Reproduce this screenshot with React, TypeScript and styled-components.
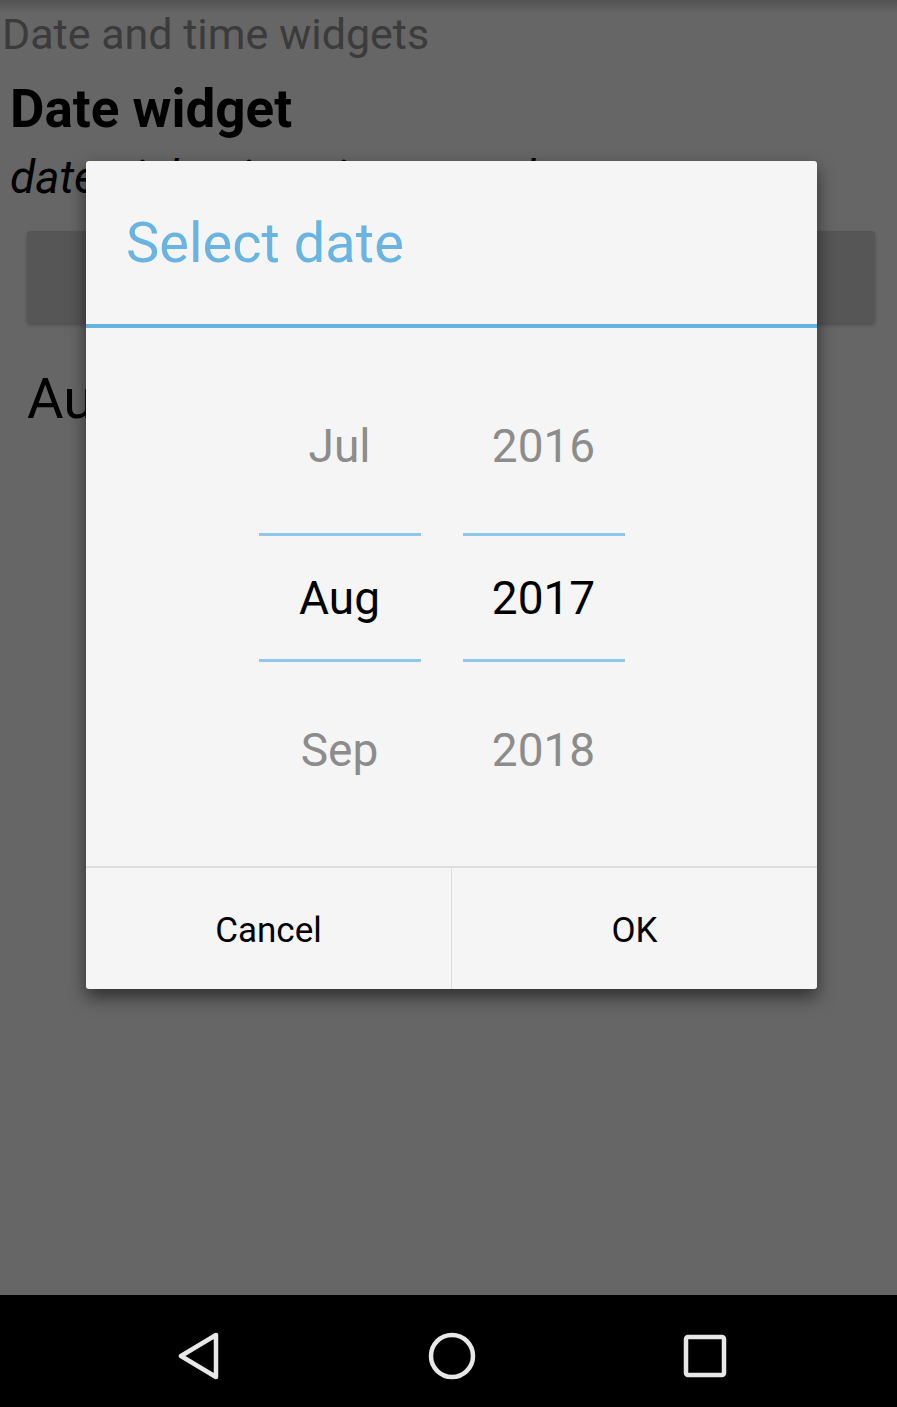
import React from 'react';
import styled, { createGlobalStyle } from 'styled-components';

const GlobalStyle = createGlobalStyle`
  html, body {
    margin: 0;
    padding: 0;
    background: #000;
  }
  body {
    font-family: Roboto, 'Noto Sans', 'Liberation Sans', sans-serif;
  }
`;

const Screen = styled.div`
  width: 897px;
  height: 1407px;
  display: flex;
  flex-direction: column;
  overflow: hidden;
`;

const Content = styled.div`
  position: relative;
  flex: 1;
  display: flex;
  flex-direction: column;
  background: linear-gradient(#d2d2d2 0, #ffffff 14px);
`;

const Header = styled.div`
  margin: 9px 0 0 2px;
  font-size: 43px;
  line-height: 50px;
  color: #939393;
  white-space: nowrap;
`;

const Title = styled.div`
  margin: 19px 0 0 10px;
  font-size: 53px;
  line-height: 62px;
  font-weight: 700;
  color: #000;
  white-space: nowrap;
`;

const Subtitle = styled.div`
  margin: 10px 0 0 10px;
  font-size: 46px;
  line-height: 54px;
  font-style: italic;
  color: #000;
  white-space: nowrap;
`;

const SetButton = styled.div`
  margin: 27px 22px 0 27px;
  height: 92px;
  border-radius: 4px;
  background: #d6d6d6;
  box-shadow: 0 2px 4px rgba(0, 0, 0, 0.25);
  display: flex;
  align-items: center;
  justify-content: center;
  font-size: 32px;
  color: #000;
`;

const PickedDate = styled.div`
  margin: 43px 0 0 27px;
  font-size: 56px;
  line-height: 66px;
  color: #000;
  white-space: nowrap;
`;

const Overlay = styled.div`
  position: absolute;
  inset: 0;
  background: rgba(0, 0, 0, 0.6);
  padding: 161px 0 0 86px;
`;

const Dialog = styled.div`
  width: 731px;
  height: 828px;
  background: #f5f5f5;
  border-radius: 3px;
  box-shadow: 0 8px 18px rgba(0, 0, 0, 0.55);
  display: flex;
  flex-direction: column;
  overflow: hidden;
`;

const DialogTitle = styled.div`
  height: 163px;
  padding-left: 40px;
  display: flex;
  align-items: center;
  font-size: 56px;
  color: #69b4e0;
  border-bottom: 4px solid #66b3e0;
`;

const Picker = styled.div`
  height: 538px;
  display: flex;
  justify-content: center;
  gap: 42px;
  padding: 42px 20px 0 0;
  box-sizing: border-box;
`;

const Column = styled.div`
  width: 162px;
  display: flex;
  flex-direction: column;
`;

const Item = styled.div<{ $selected?: boolean }>`
  height: 152px;
  box-sizing: border-box;
  display: flex;
  flex-direction: column;
  padding: ${(p) => (p.$selected ? '11px 0 12px' : '0')};
`;

const Value = styled.div<{ $selected?: boolean }>`
  flex: 1;
  display: flex;
  align-items: center;
  justify-content: center;
  font-size: 46px;
  line-height: 1;
  color: ${(p) => (p.$selected ? '#000' : '#8c8c8c')};
  border-top: ${(p) => (p.$selected ? '3px solid #8ec8ea' : 'none')};
  border-bottom: ${(p) => (p.$selected ? '3px solid #8ec8ea' : 'none')};
`;

const ButtonBar = styled.div`
  flex: 1;
  display: flex;
  border-top: 2px solid #dedede;
`;

const DialogButton = styled.div<{ $divider?: boolean }>`
  flex: 1;
  display: flex;
  align-items: center;
  justify-content: center;
  padding-top: 3px;
  font-size: 35px;
  color: #000;
  border-left: ${(p) => (p.$divider ? '1px solid #dcdcdc' : 'none')};
`;

const NavBar = styled.div`
  height: 112px;
  box-sizing: border-box;
  background: #000;
  display: flex;
  align-items: center;
  justify-content: center;
  gap: 205px;
  padding: 10px 0 0 6px;
`;

const NavIcon = styled.svg`
  width: 48px;
  height: 48px;
  fill: none;
  stroke: #e8e8e8;
  stroke-width: 4.5;
  stroke-linejoin: round;
`;

type ColumnData = { values: string[]; selected: number };

const columns: ColumnData[] = [
  { values: ['Jul', 'Aug', 'Sep'], selected: 1 },
  { values: ['2016', '2017', '2018'], selected: 1 },
];

export default function App() {
  return (
    <>
      <GlobalStyle />
      <Screen>
        <Content>
          <Header>Date and time widgets</Header>
          <Title>Date widget</Title>
          <Subtitle>date picker in spinner mode</Subtitle>
          <SetButton>SET DATE</SetButton>
          <PickedDate>Aug 15, 2017</PickedDate>

          <Overlay>
            <Dialog>
              <DialogTitle>Select date</DialogTitle>
              <Picker>
                {columns.map((col, ci) => (
                  <Column key={ci}>
                    {col.values.map((v, i) => (
                      <Item key={v} $selected={i === col.selected}>
                        <Value $selected={i === col.selected}>{v}</Value>
                      </Item>
                    ))}
                  </Column>
                ))}
              </Picker>
              <ButtonBar>
                <DialogButton>Cancel</DialogButton>
                <DialogButton $divider>OK</DialogButton>
              </ButtonBar>
            </Dialog>
          </Overlay>
        </Content>

        <NavBar>
          <NavIcon viewBox="0 0 48 48">
            <polygon points="41,3 41,45 6,24" />
          </NavIcon>
          <NavIcon viewBox="0 0 48 48">
            <circle cx="24" cy="24" r="21" />
          </NavIcon>
          <NavIcon viewBox="0 0 48 48">
            <rect x="5" y="5" width="38" height="38" rx="2" />
          </NavIcon>
        </NavBar>
      </Screen>
    </>
  );
}
